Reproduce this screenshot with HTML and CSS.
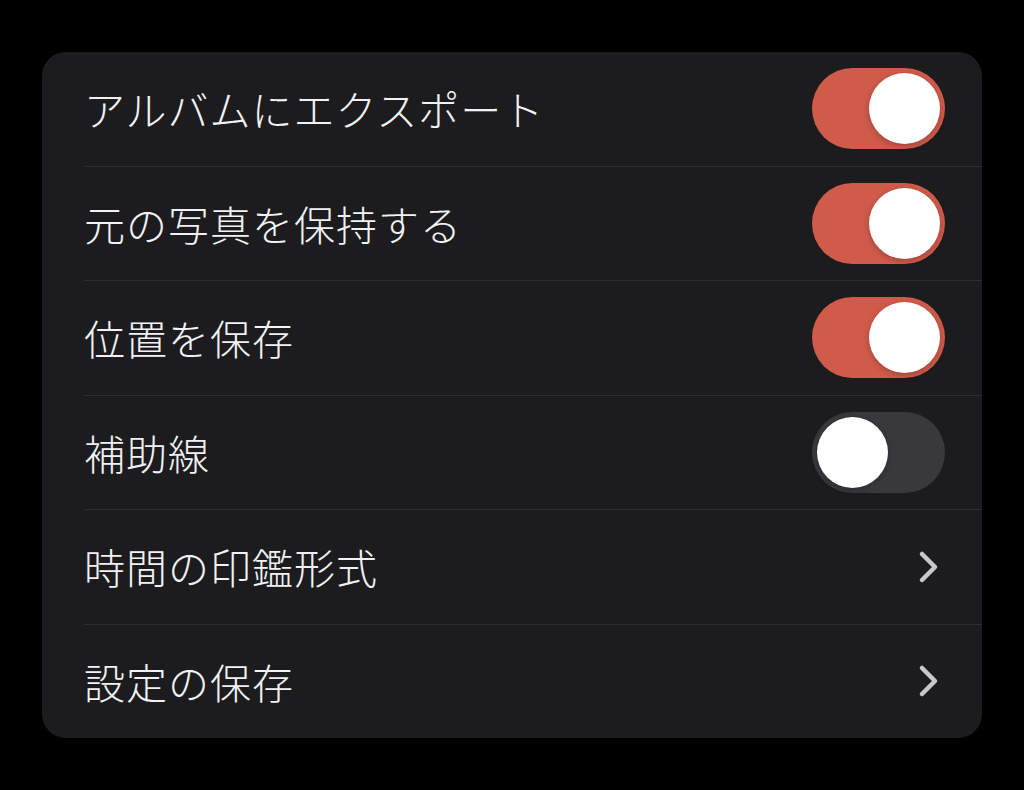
FILE: index.html
```html
<!DOCTYPE html>
<html lang="ja">
<head>
<meta charset="utf-8">
<link rel="stylesheet" href="styles.css">
</head>
<body>
<div class="card">
  <div class="row"><span class="label">アルバムにエクスポート</span><span class="toggle on"><span class="knob"></span></span></div>
  <div class="row"><span class="label">元の写真を保持する</span><span class="toggle on"><span class="knob"></span></span></div>
  <div class="row"><span class="label">位置を保存</span><span class="toggle on"><span class="knob"></span></span></div>
  <div class="row"><span class="label">補助線</span><span class="toggle"><span class="knob"></span></span></div>
  <div class="row"><span class="label">時間の印鑑形式</span><svg class="chev" width="22" height="34" viewBox="0 0 22 34"><path d="M4 4 L17 17 L4 30" fill="none" stroke="#c7c7cc" stroke-width="4.5" stroke-linecap="round" stroke-linejoin="round"/></svg></div>
  <div class="row"><span class="label">設定の保存</span><svg class="chev" width="22" height="34" viewBox="0 0 22 34"><path d="M4 4 L17 17 L4 30" fill="none" stroke="#c7c7cc" stroke-width="4.5" stroke-linecap="round" stroke-linejoin="round"/></svg></div>
</div>
</body>
</html>
```
FILE: styles.css
```css
html, body {
  margin: 0;
  padding: 0;
  background: #000;
}
body {
  width: 1024px;
  height: 790px;
  padding: 52px 42px 0 42px;
  box-sizing: border-box;
  font-family: "Noto Sans CJK JP", "Noto Sans", sans-serif;
}
.card {
  background: #1c1c1e;
  border-radius: 24px;
  height: 686px;
  display: flex;
  flex-direction: column;
  padding-left: 42px;
  overflow: hidden;
}
.row {
  flex: 1;
  display: flex;
  align-items: center;
  justify-content: space-between;
  border-bottom: 1px solid #2e2e31;
  padding-right: 37px;
}
.row:last-child {
  border-bottom: none;
}
.label {
  color: #f2f2f4;
  font-size: 41px;
  font-weight: 300;
  letter-spacing: 1px;
  line-height: 1;
}
.toggle {
  width: 133px;
  height: 81px;
  border-radius: 41px;
  background: #39393d;
  display: flex;
  align-items: center;
  padding: 0 5px;
  box-sizing: border-box;
}
.toggle.on {
  background: #d05b4b;
  justify-content: flex-end;
}
.knob {
  width: 71px;
  height: 71px;
  border-radius: 50%;
  background: #fff;
  box-shadow: 0 2px 6px rgba(0,0,0,0.25);
}
.chev {
  margin-right: 5px;
}
```
